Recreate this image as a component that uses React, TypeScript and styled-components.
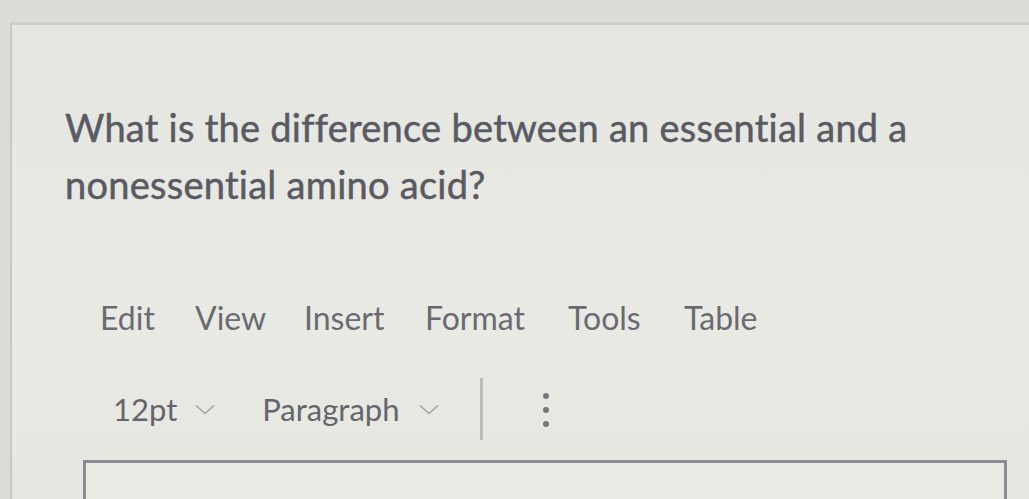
import styled, { createGlobalStyle } from 'styled-components';

const GlobalStyle = createGlobalStyle`
  html, body {
    margin: 0;
    padding: 0;
    background: #dcddd6;
    font-family: Lato, "Open Sans", sans-serif;
    overflow: hidden;
  }
`;

const Page = styled.div`
  width: 1029px;
  height: 499px;
  padding: 22px 0 0 10px;
  box-sizing: border-box;
`;

const Panel = styled.div`
  height: 100%;
  background: linear-gradient(180deg, #e5e6df 0%, #e9eae4 60%, #e6e7e0 100%);
  border-left: 2px solid #c9cac3;
  border-top: 3px solid #cfd0c9;
  padding: 74px 0 0 53px;
  box-sizing: border-box;
  display: flex;
  flex-direction: column;
`;

const Question = styled.p`
  margin: 0;
  width: 900px;
  font-size: 38px;
  line-height: 57px;
  color: #595a63;
  letter-spacing: 0.25px;
  -webkit-text-stroke: 0.5px #595a63;
`;

const MenuBar = styled.nav`
  display: flex;
  margin: 86px 0 0 35px;
`;

const MenuItem = styled.span<{ $w: number }>`
  width: ${({ $w }) => $w}px;
  font-size: 32px;
  line-height: 38px;
  color: #696a72;
`;

const Toolbar = styled.div`
  display: flex;
  align-items: center;
  margin: 40px 0 0 48px;
  height: 64px;
`;

const Select = styled.span<{ $gap: number; $after: number }>`
  display: flex;
  align-items: center;
  gap: ${({ $gap }) => $gap}px;
  font-size: 31px;
  color: #64656c;
  margin-right: ${({ $after }) => $after}px;
`;

const Chevron = () => (
  <svg width="20" height="11" viewBox="0 0 20 11">
    <path d="M1 1.5 L10 9.5 L19 1.5" fill="none" stroke="#a3a4aa" strokeWidth="1.6" />
  </svg>
);

const Divider = styled.span`
  width: 3px;
  height: 62px;
  background: #bdbeba;
  margin-right: 60px;
`;

const Kebab = styled.span`
  display: flex;
  flex-direction: column;
  gap: 8px;
  margin-top: 2px;

  i {
    width: 6px;
    height: 6px;
    border-radius: 50%;
    background: #76777d;
  }
`;

const Editor = styled.div`
  margin: 19px 0 0 18px;
  width: 918px;
  flex: 1;
  border: 3px solid #8b8c96;
  border-bottom: none;
  background: #eaebe5;
`;

const menu: [string, number][] = [
  ['Edit', 95],
  ['View', 109],
  ['Insert', 121],
  ['Format', 143],
  ['Tools', 116],
  ['Table', 90],
];

export default function App() {
  return (
    <>
      <GlobalStyle />
      <Page>
        <Panel>
          <Question>What is the difference between an essential and a nonessential amino acid?</Question>
          <MenuBar>
            {menu.map(([label, w]) => (
              <MenuItem key={label} $w={w}>{label}</MenuItem>
            ))}
          </MenuBar>
          <Toolbar>
            <Select $gap={18} $after={47}>12pt <Chevron /></Select>
            <Select $gap={20} $after={41}>Paragraph <Chevron /></Select>
            <Divider />
            <Kebab><i /><i /><i /></Kebab>
          </Toolbar>
          <Editor />
        </Panel>
      </Page>
    </>
  );
}
